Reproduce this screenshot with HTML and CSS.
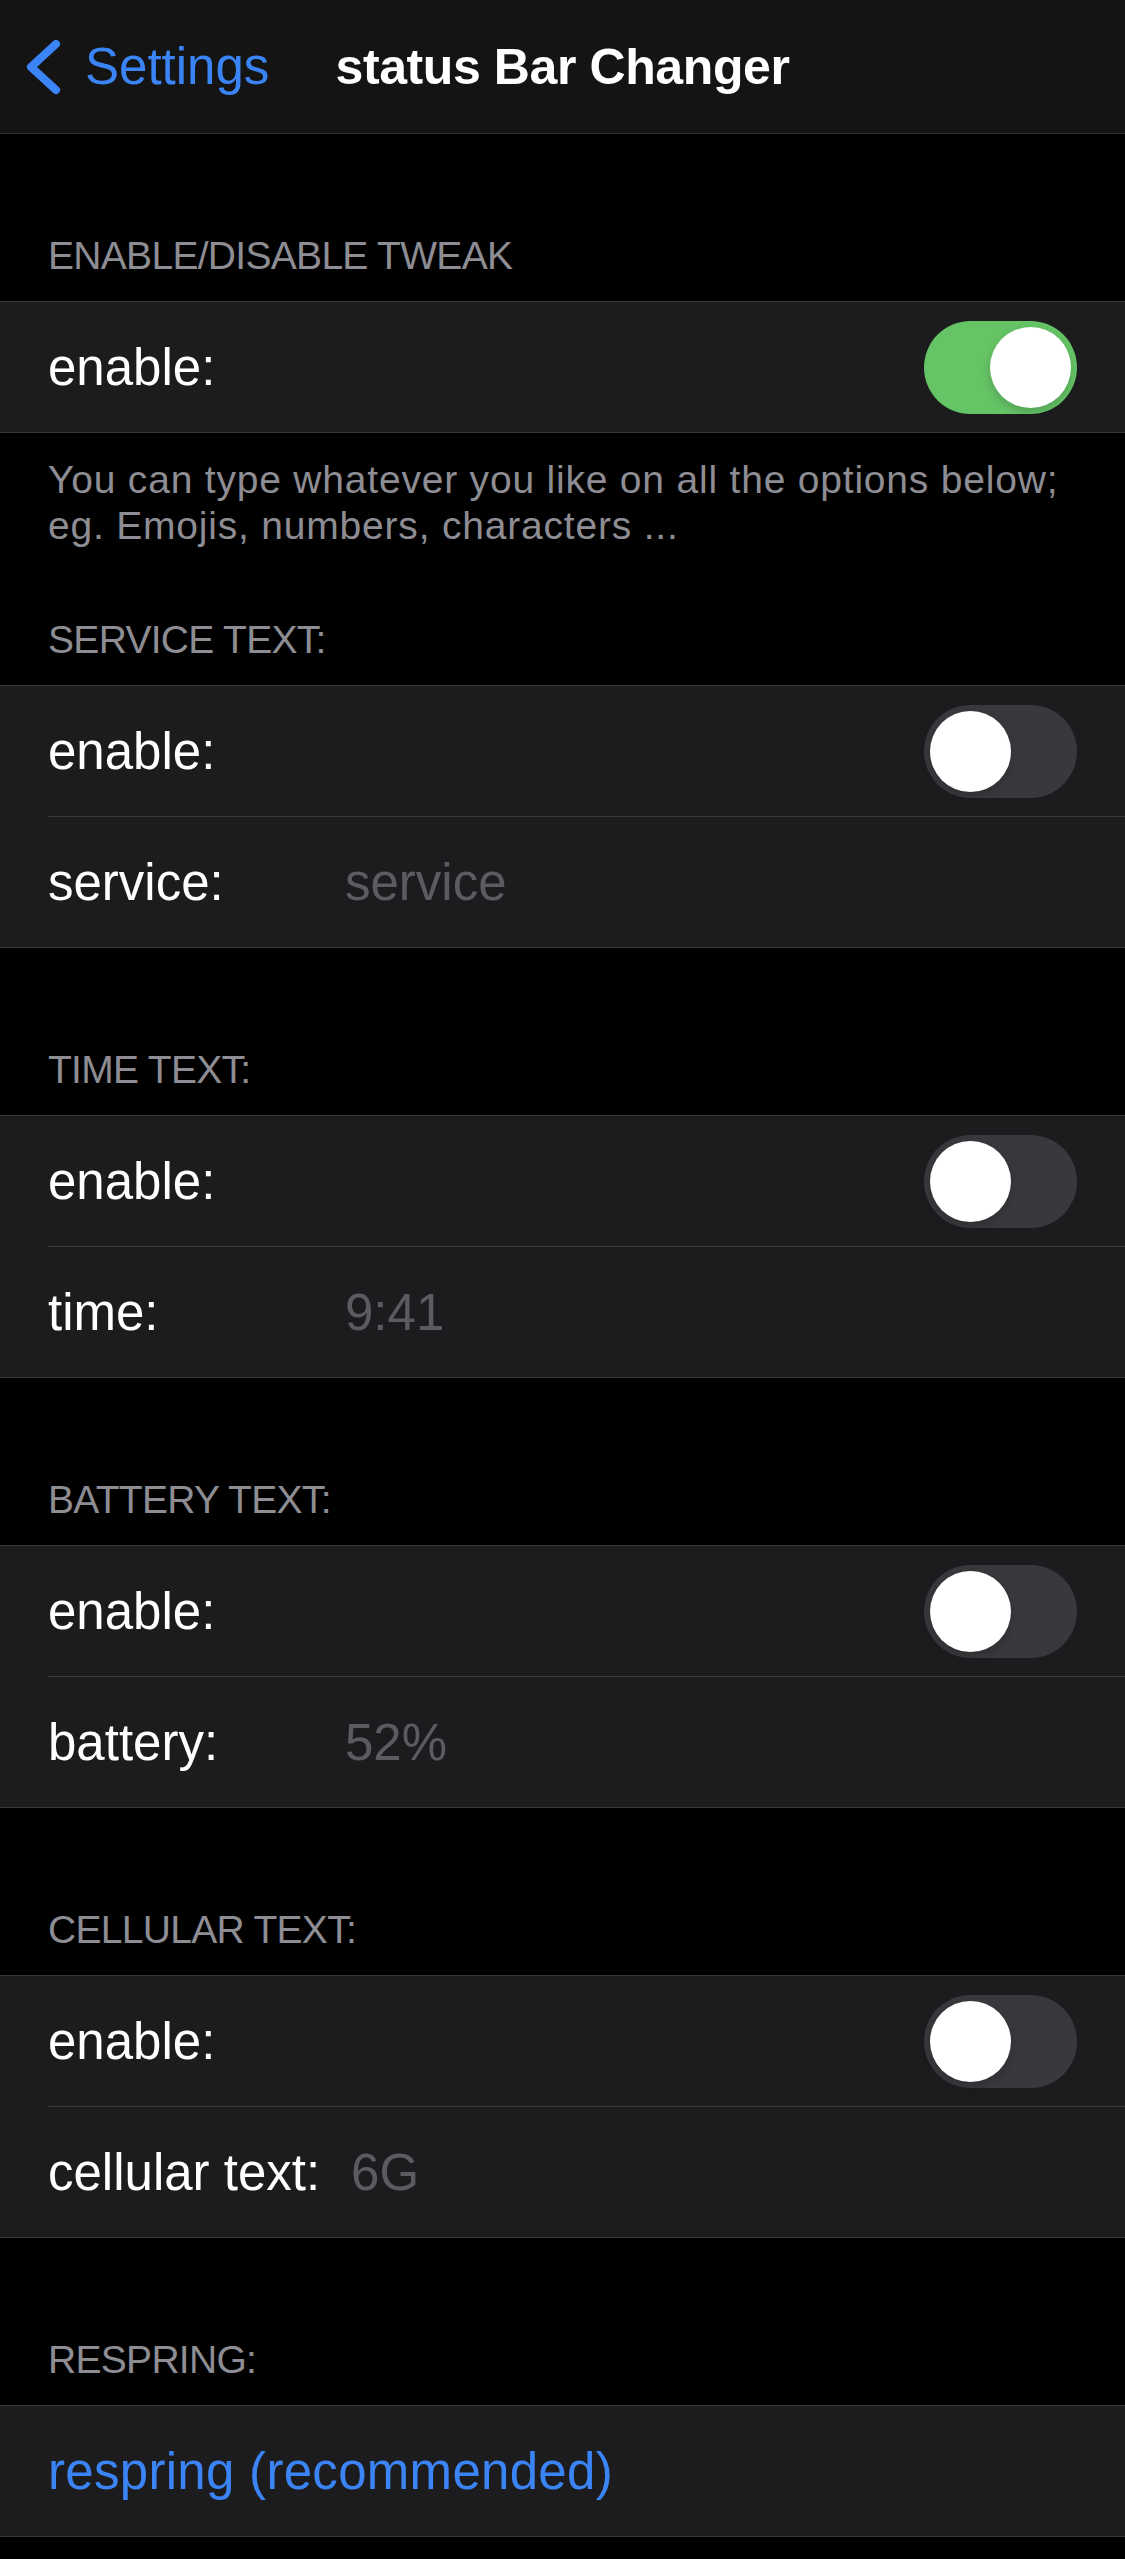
FILE: index.html
```html
<!DOCTYPE html>
<html lang="en">
<head>
  <meta charset="UTF-8">
  <title>status Bar Changer</title>
  <link rel="stylesheet" href="styles.css">
</head>
<body>
  <header class="navbar">
    <a class="back" href="#">
      <svg class="chevron" width="40" height="62" viewBox="0 0 40 62">
        <polyline points="33,8 8,31 33,54" fill="none" stroke="currentColor" stroke-width="8" stroke-linecap="round" stroke-linejoin="round"/>
      </svg>
      <span>Settings</span>
    </a>
    <h1>status Bar Changer</h1>
    <div></div>
  </header>

  <main>
    <div class="section-header">ENABLE/DISABLE TWEAK</div>
    <div class="group">
      <div class="row">
        <span class="label">enable:</span>
        <span class="switch on"></span>
      </div>
    </div>
    <div class="footer">You can type whatever you like on all the options below;<br>eg. Emojis, numbers, characters ...</div>

    <div class="section-header">SERVICE TEXT:</div>
    <div class="group">
      <div class="row">
        <span class="label">enable:</span>
        <span class="switch"></span>
      </div>
      <div class="row">
        <span class="label field">service:</span>
        <span class="placeholder">service</span>
      </div>
    </div>

    <div class="section-header">TIME TEXT:</div>
    <div class="group">
      <div class="row">
        <span class="label">enable:</span>
        <span class="switch"></span>
      </div>
      <div class="row">
        <span class="label field">time:</span>
        <span class="placeholder">9:41</span>
      </div>
    </div>

    <div class="section-header">BATTERY TEXT:</div>
    <div class="group">
      <div class="row">
        <span class="label">enable:</span>
        <span class="switch"></span>
      </div>
      <div class="row">
        <span class="label field">battery:</span>
        <span class="placeholder">52%</span>
      </div>
    </div>

    <div class="section-header">CELLULAR TEXT:</div>
    <div class="group">
      <div class="row">
        <span class="label">enable:</span>
        <span class="switch"></span>
      </div>
      <div class="row">
        <span class="label field">cellular text:</span>
        <span class="placeholder">6G</span>
      </div>
    </div>

    <div class="section-header">RESPRING:</div>
    <div class="group">
      <div class="row">
        <span class="label link">respring (recommended)</span>
      </div>
    </div>
  </main>
</body>
</html>
```

FILE: styles.css
```css
body {
  font-family: "Liberation Sans", Arial, sans-serif;
  background-color: #000;
  color: #fff;
  margin: 0;
  padding: 0;
}
.navbar {
  height: 133px;
  background-color: #141414;
  border-bottom: 1px solid #2e2e30;
  display: grid;
  grid-template-columns: 1fr auto 1fr;
  align-items: center;
}
.back {
  display: flex;
  align-items: center;
  color: #3b84f6;
  text-decoration: none;
  font-size: 51px;
}
.chevron {
  margin-left: 23px;
  margin-right: 22px;
}
.navbar h1 {
  margin: 0;
  font-size: 50px;
  font-weight: bold;
  letter-spacing: -0.4px;
}
.section-header {
  padding: 99px 48px 22px;
  font-size: 39px;
  line-height: 46px;
  letter-spacing: -0.7px;
  color: #8d8d93;
}
.footer + .section-header {
  padding-top: 68px;
}
.group {
  background-color: #1c1c1e;
  border-top: 1px solid #38383a;
  border-bottom: 1px solid #38383a;
}
.row {
  height: 130px;
  margin-left: 48px;
  padding-right: 48px;
  display: flex;
  align-items: center;
  font-size: 51px;
}
.row + .row {
  border-top: 1px solid #38383a;
}
.label {
  flex: none;
}
.label.field {
  min-width: 266px;
  padding-right: 31px;
}
.link {
  color: #3b84f6;
  letter-spacing: 0.3px;
}
.placeholder {
  color: #5b5b60;
}
.switch {
  margin-left: auto;
  width: 153px;
  height: 93px;
  border-radius: 47px;
  background-color: #39393d;
  position: relative;
}
.switch::after {
  content: "";
  position: absolute;
  top: 6px;
  left: 6px;
  width: 81px;
  height: 81px;
  border-radius: 50%;
  background: #fff;
  box-shadow: 0 4px 10px rgba(0, 0, 0, 0.18);
}
.switch.on {
  background-color: #65c466;
}
.switch.on::after {
  left: 66px;
}
.footer {
  padding: 24px 48px 0;
  font-size: 39px;
  line-height: 46px;
  letter-spacing: 0.8px;
  color: #8d8d93;
}
```
